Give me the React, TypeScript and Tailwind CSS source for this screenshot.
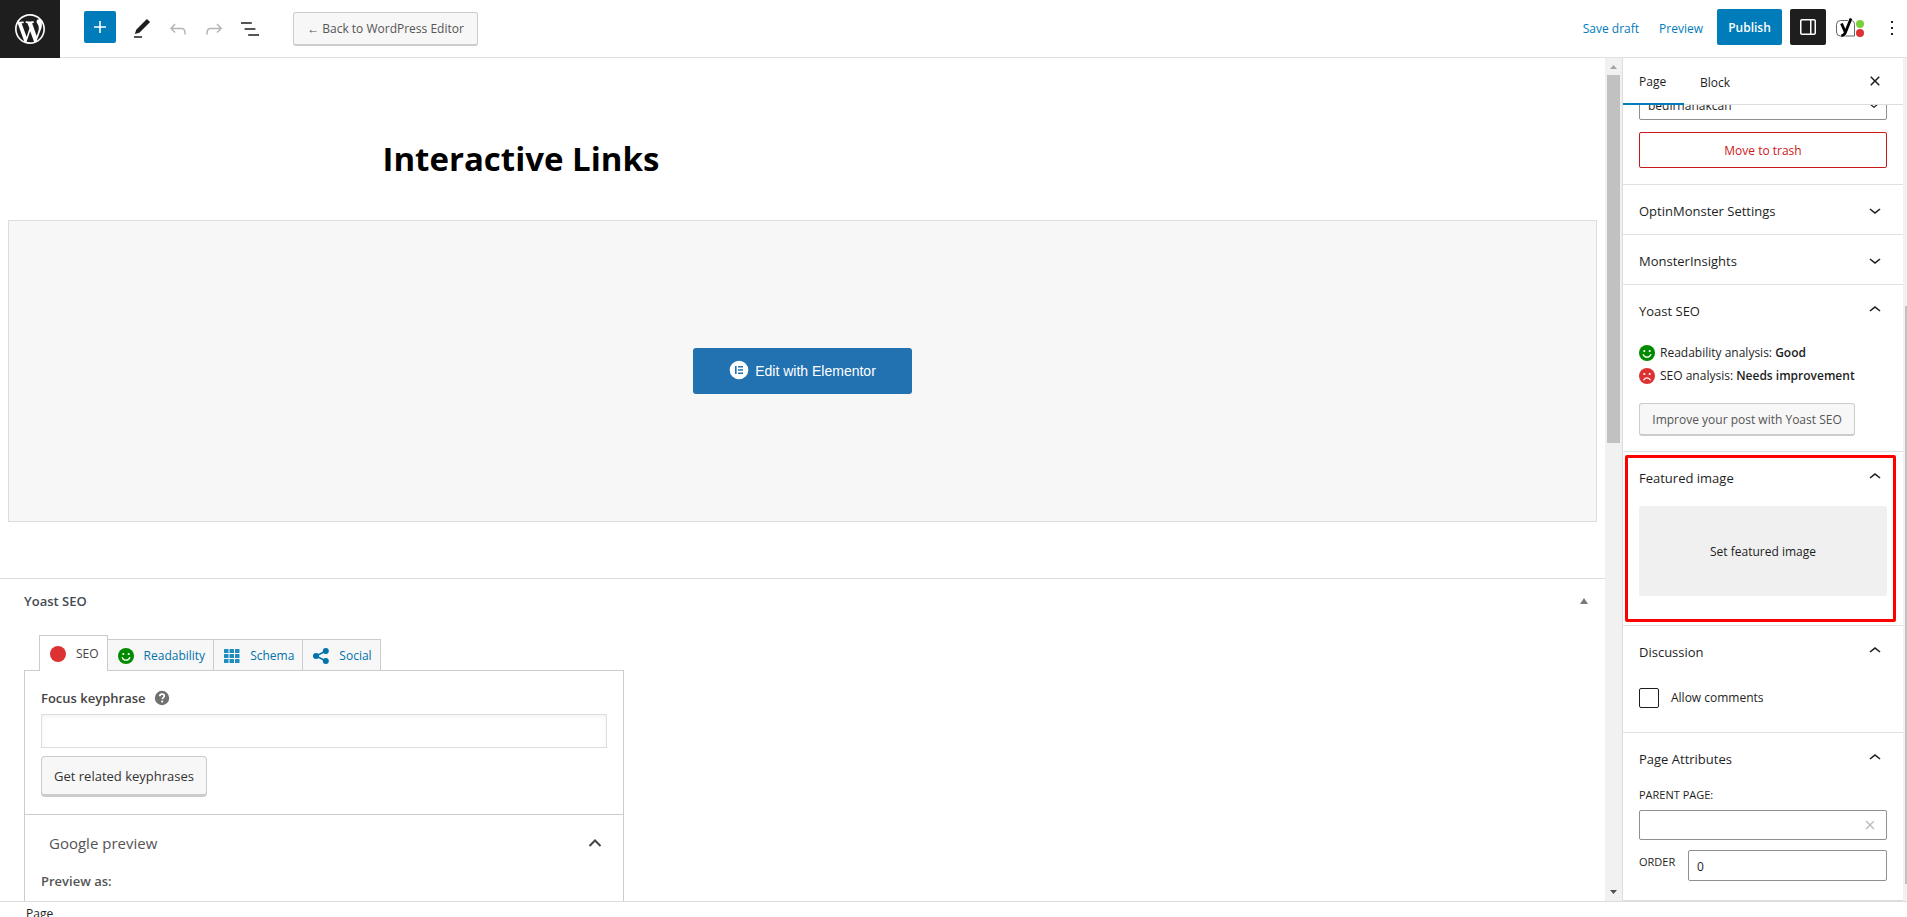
import React from "react";

// 24x24 editor icon paths
const icons = {
  plus: "M18 11.2h-5.2V6h-1.6v5.2H6v1.6h5.2V18h1.6v-5.2H18z",
  edit: "M20.1 5.1L16.9 2 6.2 12.7l-1.3 4.4 4.5-1.3L20.1 5.1zM4 20.8h8v-1.5H4v1.5z",
  undo: "M18.3 11.7c-.6-.6-1.4-.9-2.3-.9H6.7l2.9-3.3-1.1-1-4.5 5L8.5 16l1-1-2.7-2.7H16c.5 0 .9.2 1.3.5 1 1 1 3.4 1 4.5v.3h1.5v-.2c0-1.5 0-4.3-1.5-5.7z",
  redo: "M15.6 6.5l-1.1 1 2.9 3.3H8c-.9 0-1.7.3-2.3.9-1.4 1.5-1.4 4.2-1.4 5.6v.2h1.5v-.3c0-1.1 0-3.5 1-4.5.3-.3.7-.5 1.3-.5h9.2L14.5 15l1.1 1.1 4.6-4.6-4.6-5z",
  list: "M13.8 5.2H3v1.5h10.8V5.2zm-3.6 12v1.5H21v-1.5H10.2zm7.2-6H6.6v1.5h10.8v-1.5z",
  sidebar:
    "M18 4H6c-1.1 0-2 .9-2 2v12c0 1.1.9 2 2 2h12c1.1 0 2-.9 2-2V6c0-1.1-.9-2-2-2zm-4 14.5H6c-.3 0-.5-.2-.5-.5V6c0-.3.2-.5.5-.5h8v13zm4.5-.5c0 .3-.2.5-.5.5h-2.5v-13H18c.3 0 .5.2.5.5v12z",
  more: "M13 19h-2v-2h2v2zm0-6h-2v-2h2v2zm0-6h-2V5h2v2z",
  close:
    "M12 13.06l3.712 3.713 1.061-1.06L13.061 12l3.712-3.712-1.06-1.06L12 10.938 8.288 7.227l-1.061 1.06L10.939 12l-3.712 3.712 1.06 1.061L12 13.061z",
  down: "M17.5 11.6L12 16l-5.5-4.4.9-1.2L12 14l4.5-3.6 1 1.2z",
  up: "M6.5 12.4L12 8l5.5 4.4-.9 1.2L12 10l-4.5 3.6-1-1.2z",
};

const Icon = ({ name, className = "size-6" }: { name: keyof typeof icons; className?: string }) => (
  <svg viewBox="0 0 24 24" fill="currentColor" className={`shrink-0 ${className}`} aria-hidden="true">
    <path d={icons[name]} />
  </svg>
);

const WordPressLogo = () => (
  <svg viewBox="-2 -2 24 24" fill="currentColor" className="size-9" aria-hidden="true">
    <path d="M20 10c0-5.51-4.49-10-10-10C4.48 0 0 4.49 0 10c0 5.52 4.48 10 10 10 5.51 0 10-4.48 10-10zM7.78 15.37L4.37 6.22c.55-.02 1.17-.08 1.17-.08.5-.06.44-1.13-.06-1.11 0 0-1.45.11-2.37.11-.18 0-.37 0-.58-.01C4.12 2.69 6.87 1.11 10 1.11c2.33 0 4.45.87 6.05 2.34-.68-.11-1.65.39-1.65 1.58 0 .74.45 1.36.9 2.1.35.61.55 1.36.55 2.46 0 1.49-1.4 5-1.4 5l-3.03-8.37c.54-.02.82-.17.82-.17.5-.05.44-1.25-.06-1.22 0 0-1.44.12-2.38.12-.87 0-2.33-.12-2.33-.12-.5-.03-.56 1.2-.06 1.22l.92.08 1.26 3.41zM17.41 10c.24-.64.74-1.87.43-4.25.7 1.29 1.05 2.71 1.05 4.25 0 3.29-1.73 6.24-4.4 7.78.97-2.59 1.94-5.2 2.92-7.78zM6.1 18.09C3.12 16.65 1.11 13.53 1.11 10c0-1.3.23-2.48.72-3.59C3.25 10.3 4.67 14.2 6.1 18.09zm4.03-6.63l2.58 6.98c-.86.29-1.76.45-2.71.45-.79 0-1.57-.11-2.29-.33.81-2.38 1.62-4.74 2.42-7.1z" />
  </svg>
);

const YoastLogo = () => (
  <svg viewBox="0 0 28 20" className="h-5 w-7" fill="none" aria-hidden="true">
    <path d="M12 2.5H4.500a4 4 0 0 0-4 4v7.500a4 4 0 0 0 4 4H18.500V6.500c0-2-.8-3.300-2.500-3.900" stroke="#666" />
    <path d="M5.500 5.500l3.700 8.500M15 .5L9.400 14.500c-.8 2.100-2 3.200-4.100 3.200" stroke="#fff" strokeWidth="4" />
    <path d="M5.500 5.500l3.700 8.500M15 .5L9.400 14.500c-.8 2.100-2 3.200-4.100 3.200" stroke="#000" strokeWidth="2.800" />
    <circle cx="24" cy="6" r="4" fill="#7ad03a" />
    <circle cx="24" cy="15" r="4" fill="#dc3232" />
  </svg>
);

const Face = ({ good }: { good: boolean }) => (
  <svg viewBox="0 0 16 16" className="size-4 shrink-0" aria-hidden="true">
    <circle cx="8" cy="8" r="8" fill={good ? "#008a00" : "#dc3232"} />
    <circle cx="5.300" cy="6" r="1.100" fill="#fff" />
    <circle cx="10.700" cy="6" r="1.100" fill="#fff" />
    <path
      d={good ? "M4 9.200c.8 2 2.200 3 4 3s3.200-1 4-3" : "M4.500 12.200c.8-1.500 2-2.300 3.500-2.300s2.700.8 3.500 2.300"}
      fill="none"
      stroke="#fff"
      strokeWidth="1.300"
    />
  </svg>
);

const ScrollBar = () => (
  <div className="flex w-[17px] shrink-0 flex-col items-center bg-[#f1f1f1]" aria-hidden="true">
    <svg viewBox="0 0 17 17" className="size-[17px]">
      <path d="M5 11h7L8.500 7z" fill="#a3a3a3" />
    </svg>
    <div className="h-[368px] w-[13px] bg-[#c1c1c1]" />
    <svg viewBox="0 0 17 17" className="mt-auto size-[17px]">
      <path d="M5 6h7l-3.500 4z" fill="#505050" />
    </svg>
  </div>
);

const Header = () => (
  <header className="flex h-[58px] shrink-0 items-center border-b border-[#e0e0e0] bg-white">
    <a href="#pages" aria-label="View Pages" className="flex h-[58px] w-[60px] items-center justify-center bg-[#1e1e1e] text-white">
      <WordPressLogo />
    </a>
    <div className="flex items-center pl-6">
      <button aria-label="Toggle block inserter" className="mr-2 mb-1 flex size-8 items-center justify-center rounded-xs bg-[#007cba] text-white">
        <Icon name="plus" />
      </button>
      <button aria-label="Tools" className="flex size-9 items-center justify-center">
        <Icon name="edit" />
      </button>
      <button aria-label="Undo" disabled className="flex size-9 items-center justify-center text-[#b5b5b5]">
        <Icon name="undo" />
      </button>
      <button aria-label="Redo" disabled className="flex size-9 items-center justify-center text-[#b5b5b5]">
        <Icon name="redo" />
      </button>
      <button aria-label="List View" className="flex size-9 items-center justify-center">
        <Icon name="list" />
      </button>
      <button className="ml-[25px] h-[34px] w-[185px] rounded-[3px] border border-b-2 border-[#ccc] bg-[#f7f7f7] pt-0.5 text-[#555]">
        ← Back to WordPress Editor
      </button>
    </div>
    <div className="ml-auto flex items-center">
      <button className="mr-5 text-[#007cba]">Save draft</button>
      <a href="#preview" className="mr-[14px] text-[#007cba]">
        Preview
      </a>
      <button className="mr-2 mb-[3px] h-9 w-[65px] rounded-xs bg-[#007cba] pt-0.5 font-semibold text-white">Publish</button>
      <button aria-label="Settings" className="mr-1.5 mb-[3px] flex size-9 items-center justify-center rounded-xs bg-[#1e1e1e] text-white">
        <Icon name="sidebar" />
      </button>
      <button aria-label="Yoast SEO" className="flex size-9 items-center justify-center pb-0.5">
        <YoastLogo />
      </button>
      <button aria-label="Options" className="ml-[9px] flex h-9 w-[30px] items-center justify-center pb-0.5">
        <Icon name="more" />
      </button>
    </div>
  </header>
);

const tabs = [
  {
    label: "Readability",
    icon: <Face good />,
  },
  {
    label: "Schema",
    icon: (
      <svg viewBox="0 0 16 14" className="h-[14px] w-4" fill="#1e8cbe" aria-hidden="true">
        {[0, 5, 10].map((y) => [0, 5.5, 11].map((x) => <rect key={`${x}-${y}`} x={x} y={y} width="4.500" height="4" rx="0.5" />))}
      </svg>
    ),
  },
  {
    label: "Social",
    icon: (
      <svg viewBox="0 0 16 16" className="size-4" fill="#0073aa" aria-hidden="true">
        <path d="M13 3L3 8l10 5" fill="none" stroke="#0073aa" strokeWidth="1.600" />
        <circle cx="12.800" cy="3" r="3" />
        <circle cx="3" cy="8" r="3" />
        <circle cx="12.800" cy="13" r="3" />
      </svg>
    ),
  },
];

const YoastMetabox = () => (
  <section className="border-t border-[#ddd] text-[13px]">
    <div className="flex h-11 items-center justify-between pr-4 pl-6">
      <h2 className="font-semibold text-[#444b54]">Yoast SEO</h2>
      <button aria-label="Toggle panel: Yoast SEO">
        <svg viewBox="0 0 10 8" className="h-2 w-[10px]" fill="#787c82" aria-hidden="true">
          <path d="M5 1l4 6H1z" />
        </svg>
      </button>
    </div>
    <div className="ml-6 w-[600px] pt-3">
      <div role="tablist" className="flex items-end pl-[15px] text-xs">
        <button
          role="tab"
          aria-selected="true"
          className="relative -mb-px flex h-9 items-center gap-[10px] border border-b-0 border-[#ccc] bg-white pr-2 pl-[10px] text-[#444]"
        >
          <span className="size-4 rounded-full bg-[#dc3232]" />
          SEO
        </button>
        {tabs.map((tab) => (
          <button
            key={tab.label}
            role="tab"
            aria-selected="false"
            className="flex h-[31px] items-center gap-[10px] border border-b-0 border-l-0 border-[#ccc] bg-[#f7f7f7] pt-0.5 pr-2 pl-[10px] text-[#0073aa]"
          >
            {tab.icon}
            {tab.label}
          </button>
        ))}
      </div>
      <div className="border border-[#ccc]">
        <div className="flex h-36 flex-col items-start border-b border-[#ccc] px-4 pt-[17px]">
          <div className="flex h-[26px] items-start gap-2">
            <label htmlFor="keyphrase" className="font-semibold text-[#444]">
              Focus keyphrase
            </label>
            <svg viewBox="0 0 16 16" className="mt-0.5 size-4" aria-hidden="true">
              <circle cx="8" cy="8" r="7.200" fill="#707070" />
              <path d="M5.800 6.300c0-1.400 1-2.100 2.200-2.100s2.300.7 2.300 1.900c0 1.500-2.100 1.500-2.100 3.200" fill="none" stroke="#fff" strokeWidth="1.700" />
              <circle cx="8.200" cy="11.500" r="1.100" fill="#fff" />
            </svg>
          </div>
          <input id="keyphrase" type="text" className="h-[34px] w-full border border-[#ddd] px-2 shadow-inner" />
          <button className="mt-2 h-[41px] rounded-sm border border-b-[3px] border-[#ccc] bg-[#f7f7f7] px-3 text-[#333]">
            Get related keyphrases
          </button>
        </div>
        <button className="flex h-14 w-full items-center justify-between pr-[17px] pl-6 text-[15px] text-[#555]">
          Google preview
          <svg viewBox="0 0 14 10" className="mr-1 h-[10px] w-[14px]" fill="none" stroke="#444" strokeWidth="2" aria-hidden="true">
            <path d="M1.500 8L7 2.500 12.500 8" />
          </svg>
        </button>
        <p className="h-16 px-4 font-semibold text-[#555]">Preview as:</p>
      </div>
    </div>
  </section>
);

const Editor = () => (
  <main className="min-w-0 flex-1 overflow-hidden bg-white">
    <div className="mx-auto max-w-[840px] pt-[78px]">
      <h1 className="text-[33px] leading-[46px] font-bold text-black">Interactive Links</h1>
    </div>
    <div className="mx-2 mt-[38px] mb-14 flex h-[302px] items-center justify-center border border-[#ddd] bg-[#f7f7f7]">
      <button className="flex h-[46px] w-[219px] items-center justify-center gap-1.5 rounded-[3px] bg-[#2271b1] font-['Liberation_Sans',sans-serif] text-sm text-white">
        <svg viewBox="0 0 20 20" className="mb-0.5 size-5" aria-hidden="true">
          <circle cx="10" cy="10" r="9.300" fill="#fff" />
          <path d="M6 6h1.600v8H6zM9 6h5v1.600H9zM9 9.200h5v1.600H9zM9 12.400h5V14H9z" fill="#2271b1" />
        </svg>
        Edit with Elementor
      </button>
    </div>
    <YoastMetabox />
  </main>
);

type PanelProps = {
  title: string;
  open?: boolean;
  children?: React.ReactNode;
};

const Panel = ({ title, open = false, children }: PanelProps) => (
  <section className="relative shrink-0 border-t border-[#e0e0e0]">
    <h2>
      <button aria-expanded={open} className="flex h-[49px] w-full items-center justify-between px-4 text-[13px] font-medium">
        <span className="pt-0.5">{title}</span>
        <Icon name={open ? "up" : "down"} />
      </button>
    </h2>
    {children}
  </section>
);

const Sidebar = () => (
  <aside className="flex w-[285px] shrink-0 flex-col border-l border-[#ddd] bg-white">
    <div className="flex h-[47px] shrink-0">
      <div className="flex flex-1 items-center justify-between border-b border-[#ddd] pr-4">
        <div className="relative z-10 -mb-px flex h-[47px]">
          <button className="w-[61px] border-b-2 border-[#007cba] pt-[3px] pl-4 text-left">Page</button>
          <button className="px-4 pt-0.5">Block</button>
        </div>
        <button aria-label="Close settings">
          <Icon name="close" />
        </button>
      </div>
      <div className="w-1 bg-[#f1f1f1]" />
    </div>
    <div className="flex min-h-0 flex-1">
      <div className="flex min-w-0 flex-1 flex-col justify-end overflow-hidden">
        <div className="flex shrink-0 flex-col gap-3 px-4 pb-4">
          <div className="relative">
            <select aria-label="Author" className="h-[30px] w-full appearance-none rounded-xs border border-[#8c8f94] px-2 pt-0.5">
              <option>bedirhanakcan</option>
            </select>
            <Icon name="down" className="pointer-events-none absolute top-1.5 right-1 size-[18px]" />
          </div>
          <button className="h-9 rounded-xs border border-[#cc1818] pt-0.5 text-[#cc1818]">Move to trash</button>
        </div>
        <Panel title="OptinMonster Settings" />
        <Panel title="MonsterInsights" />
        <Panel title="Yoast SEO" open>
          <div className="px-4 pt-[7px] pb-[15px] leading-[23px]">
            <p className="flex items-center gap-[5px]">
              <Face good />
              <span>
                Readability analysis: <strong className="font-semibold">Good</strong>
              </span>
            </p>
            <p className="flex items-center gap-[5px]">
              <Face good={false} />
              <span>
                SEO analysis: <strong className="font-semibold">Needs improvement</strong>
              </span>
            </p>
            <button className="mt-4 h-[33px] w-[216px] rounded-[3px] border border-b-2 border-[#ccc] bg-[#f7f7f7] text-[#555]">
              Improve your post with Yoast SEO
            </button>
          </div>
        </Panel>
        <Panel title="Featured image" open>
          <div className="px-4 pt-[5px] pb-[29px]">
            <button className="h-[90px] w-full rounded-xs bg-[#f0f0f0] pt-0.5">Set featured image</button>
          </div>
          <div className="pointer-events-none absolute top-[3px] right-[7px] bottom-[3px] left-0.5 rounded-xs border-3 border-[#ff0000]" />
        </Panel>
        <Panel title="Discussion" open>
          <label className="flex items-center gap-3 px-4 pt-[13px] pb-6">
            <input type="checkbox" className="size-5 appearance-none rounded-xs border border-[#1e1e1e]" />
            Allow comments
          </label>
        </Panel>
        <Panel title="Page Attributes" open>
          <div className="border-b border-[#ddd] px-4 pt-[3px] pb-[19px]">
            <label htmlFor="parent" className="block h-[25px] text-[11px] leading-5">
              PARENT PAGE:
            </label>
            <div className="relative">
              <input id="parent" type="text" className="h-[30px] w-full rounded-xs border border-[#8c8f94] px-2" />
              <button aria-label="Clear" className="absolute top-1 right-1.5 flex text-[#bbb]">
                <Icon name="close" className="size-[22px]" />
              </button>
            </div>
            <div className="mt-[10px] flex">
              <label htmlFor="order" className="w-[49px] text-[11px] leading-6">
                ORDER
              </label>
              <input id="order" type="text" defaultValue="0" className="h-[31px] min-w-0 flex-1 rounded-xs border border-[#8c8f94] px-2 pt-0.5" />
            </div>
          </div>
        </Panel>
      </div>
      <div className="flex w-1 flex-col items-end justify-end bg-[#f1f1f1] pb-[17px]">
        <div className="h-[578px] w-0.5 bg-[#c1c1c1]" />
      </div>
    </div>
  </aside>
);

const App = () => (
  <div className="flex h-screen flex-col overflow-hidden bg-white font-['Open_Sans','Noto_Sans',sans-serif] text-xs leading-5 text-[#1e1e1e]">
    <Header />
    <div className="flex min-h-0 flex-1">
      <Editor />
      <ScrollBar />
      <Sidebar />
    </div>
    <footer className="h-4 shrink-0 border-t border-[#ddd] pt-0.5 pl-[26px]">Page</footer>
  </div>
);

export default App;
